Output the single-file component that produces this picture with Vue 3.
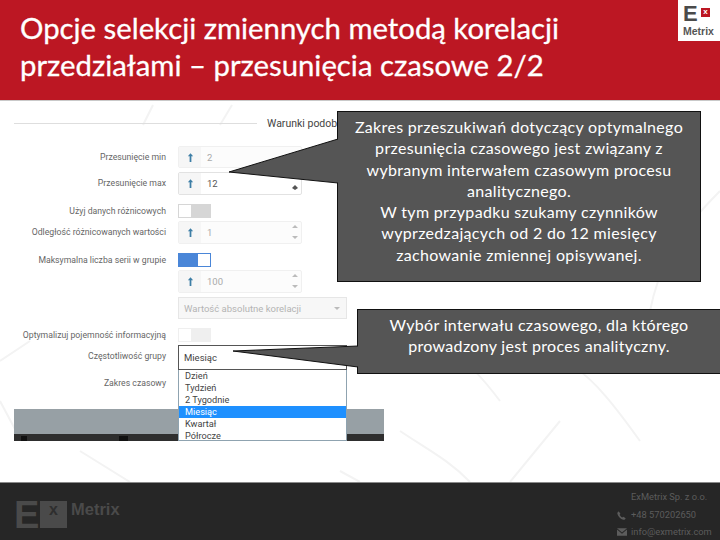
<script setup>
const options = ['Dzień', 'Tydzień', '2 Tygodnie', 'Miesiąc', 'Kwartał', 'Półrocze']
const selected = 'Miesiąc'
</script>

<template>
  <div class="slide">
    <header class="head">
      <h1>Opcje selekcji zmiennych metodą korelacji<br />przedziałami – przesunięcia czasowe 2/2</h1>
      <div class="logo">
        <div class="logo-top">
          <span class="logo-e">E</span>
          <span class="logo-x">x</span>
        </div>
        <div class="logo-name">Metrix</div>
      </div>
    </header>

    <main class="body">
      <svg class="watermark" viewBox="0 0 720 381" fill="none" stroke="#f3f3f3" stroke-width="2">
        <path d="M153 4 L143 24 M232 4 L220 24 M470 10 L420 60 M720 90 C680 130 660 160 650 210" />
        <path d="M0 300 L16 330 M0 260 L30 240 M400 250 C440 230 470 260 500 300 M520 270 C560 240 590 270 640 340" />
        <path d="M80 350 L130 381 M560 320 L510 381 M400 330 C430 350 450 360 470 381 M340 370 L360 381" />
      </svg>

      <div class="form">
        <div class="legend">
          <span class="legend-line"></span>
          <span class="legend-text">Warunki podobieństwa</span>
        </div>

        <div class="row row-input">
          <label>Przesunięcie min</label>
          <div class="field off">
            <span class="addon"><svg viewBox="0 0 8 10" width="7" height="9"><path d="M4 0 L7 3.500 H5 V10 H3 V3.500 H1 Z" fill="#3d7ea6" /></svg></span>
            <span class="val">2</span>
          </div>
        </div>
        <div class="row row-input tall">
          <label>Przesunięcie max</label>
          <div class="field">
            <span class="addon"><svg viewBox="0 0 8 10" width="7" height="9"><path d="M4 0 L7 3.500 H5 V10 H3 V3.500 H1 Z" fill="#3d7ea6" /></svg></span>
            <span class="val">12</span>
            <span class="spin">
              <svg viewBox="0 0 6 14" width="6" height="14"><path d="M3 9 L6 12 L3 14 L0 12 Z" fill="#555" /></svg>
            </span>
          </div>
        </div>
        <div class="row row-switch">
          <label>Użyj danych różnicowych</label>
          <span class="toggle"></span>
        </div>
        <div class="row row-input tall">
          <label>Odległość różnicowanych wartości</label>
          <div class="field off">
            <span class="addon"><svg viewBox="0 0 8 10" width="7" height="9"><path d="M4 0 L7 3.500 H5 V10 H3 V3.500 H1 Z" fill="#3d7ea6" /></svg></span>
            <span class="val">1</span>
            <span class="spin faint">
              <svg viewBox="0 0 6 14" width="6" height="14"><path d="M3 0 L6 3 H0 Z M3 14 L6 11 H0 Z" fill="#bbb" /></svg>
            </span>
          </div>
        </div>
        <div class="row row-switch">
          <label>Maksymalna liczba serii w grupie</label>
          <span class="toggle on"></span>
        </div>
        <div class="row row-input tall">
          <label></label>
          <div class="field off">
            <span class="addon"><svg viewBox="0 0 8 10" width="7" height="9"><path d="M4 0 L7 3.500 H5 V10 H3 V3.500 H1 Z" fill="#3d7ea6" /></svg></span>
            <span class="val">100</span>
            <span class="spin faint">
              <svg viewBox="0 0 6 14" width="6" height="14"><path d="M3 0 L6 3 H0 Z M3 14 L6 11 H0 Z" fill="#bbb" /></svg>
            </span>
          </div>
        </div>
        <div class="row row-input">
          <label></label>
          <div class="select off">
            <span>Wartość absolutne korelacji</span>
            <i class="caret"></i>
          </div>
        </div>
        <div class="row row-switch">
          <label>Optymalizuj pojemność informacyjną</label>
          <span class="toggle dim"></span>
        </div>
        <div class="row row-open">
          <label>Częstotliwość grupy</label>
          <div class="select-wrap">
            <div class="select open"><span>{{ selected }}</span></div>
            <ul class="menu">
              <li v-for="opt in options" :key="opt" :class="{ active: opt === selected }">{{ opt }}</li>
            </ul>
          </div>
        </div>
        <div class="row row-last">
          <label>Zakres czasowy</label>
        </div>

        <div class="bar">
          <div class="bar-dark">
            <span class="peg"></span>
            <span class="peg peg-2"></span>
          </div>
        </div>
      </div>

      <div class="note note-one">
        <svg class="tail tail-one" viewBox="0 0 111 46" width="111" height="46">
          <path d="M110 1 L1 34 L110 45" fill="#555" stroke="#111" stroke-width="1" />
          <path d="M109 2 H111 V44 H109 Z" fill="#555" />
        </svg>
        Zakres przeszukiwań dotyczący optymalnego<br />
        przesunięcia czasowego jest związany z<br />
        wybranym interwałem czasowym procesu<br />
        analitycznego.<br />
        W tym przypadku szukamy czynników<br />
        wyprzedzających od 2 do 12 miesięcy<br />
        zachowanie zmiennej opisywanej.
      </div>

      <div class="note note-two">
        <svg class="tail tail-two" viewBox="0 0 127 24" width="127" height="24">
          <path d="M126 1 L1 6 L126 22" fill="#555" stroke="#111" stroke-width="1" />
          <path d="M125 2 H127 V21 H125 Z" fill="#555" />
        </svg>
        Wybór interwału czasowego, dla którego<br />
        prowadzony jest proces analityczny.
      </div>
    </main>

    <footer class="foot">
      <div class="foot-logo">
        <span class="foot-e">E</span>
        <span class="foot-x">x</span>
        <span class="foot-name">Metrix</span>
      </div>
      <div class="contact">
        <div class="line">ExMetrix Sp. z o.o.</div>
        <div class="line">
          <svg class="ico" viewBox="0 0 12 12" width="9" height="9">
            <path d="M2.500 0.500 L4.500 3.500 L3.500 5 C4.300 6.700 5.300 7.700 7 8.500 L8.500 7.500 L11.500 9.500 C11 11 9.800 11.800 8.500 11.500 C4.500 10.500 1.500 7.500 0.500 3.500 C0.200 2.200 1 1 2.500 0.500 Z" fill="#5c5c5c" />
          </svg>
          +48 570202650
        </div>
        <div class="line">
          <svg class="ico" viewBox="0 0 12 9" width="10" height="8">
            <path d="M0 0 H12 L6 5 Z M0 1.500 L6 6.500 L12 1.500 V9 H0 Z" fill="#5c5c5c" />
          </svg>
          info@exmetrix.com
        </div>
      </div>
    </footer>
  </div>
</template>

<style>
html,
body {
  margin: 0;
  background: #fff;
}
</style>

<style scoped>
.slide {
  width: 720px;
  height: 540px;
  display: flex;
  flex-direction: column;
  overflow: hidden;
  font-family: 'Open Sans', 'Liberation Sans', sans-serif;
}

/* naglowek */
.head {
  height: 100px;
  flex: none;
  display: flex;
  justify-content: space-between;
  align-items: flex-start;
  background: #bc1723;
  border-bottom: 1px solid #c9c9c9;
}

.head h1 {
  margin: 9px 0 0 20px;
  font-family: Lato, 'Open Sans', sans-serif;
  font-size: 29.300px;
  line-height: 37px;
  font-weight: 400;
  color: #fff;
  -webkit-text-stroke: 0.3px #fff;
  white-space: nowrap;
}

.logo {
  width: 42px;
  height: 41px;
  background: #fff;
  box-sizing: border-box;
  padding: 5px 0 0 5px;
}

.logo-top {
  display: flex;
  align-items: flex-start;
  height: 20px;
}

.logo-e {
  font: 700 22px/18px 'Liberation Sans', sans-serif;
  color: #4a4a4a;
  width: 18px;
}

.logo-x {
  width: 9px;
  height: 9px;
  margin: 3px 0 0 0;
  background: #bc1723;
  color: #fff;
  font: 700 8px/8px 'Liberation Sans', sans-serif;
  text-align: center;
}

.logo-name {
  margin-top: 1px;
  font: 700 10.500px/11px 'Liberation Sans', sans-serif;
  color: #555;
}

/* tresc */
.body {
  flex: 1;
  position: relative;
  overflow: hidden;
  background: #fff;
}

.watermark {
  position: absolute;
  top: 0;
  left: 0;
  width: 720px;
  height: 381px;
}

.form {
  position: relative;
  width: 370px;
  margin-left: 14px;
  padding-top: 15px;
  font-family: Roboto, sans-serif;
  font-size: 8.700px;
  color: #666;
}

.legend {
  display: flex;
  align-items: center;
  gap: 10px;
  height: 14px;
  margin-bottom: 16px;
  white-space: nowrap;
}

.legend-line {
  width: 243px;
  height: 1px;
  background: #dedede;
}

.legend-text {
  color: #444;
  font-size: 10.500px;
}

.row {
  display: flex;
  align-items: flex-start;
  gap: 12px;
}

.row label {
  width: 152px;
  flex: none;
  text-align: right;
  white-space: nowrap;
  line-height: 14px;
}

.row-input {
  margin-bottom: 4px;
}

.row-input label {
  padding-top: 4px;
}

.row-switch {
  margin: 9px 0 3px;
}

.row-open {
  margin-bottom: 6px;
}

.row-open label {
  padding-top: 4px;
}

.row-last {
  height: 33px;
}

.field {
  width: 124px;
  height: 22px;
  box-sizing: border-box;
  display: flex;
  align-items: center;
  position: relative;
  border: 1px solid #e2e2e2;
  border-radius: 2px;
  background: #fff;
  color: #555;
  font-size: 9.500px;
}

.tall .field {
  height: 23px;
}

.field.off {
  border-color: #f0f0f0;
  color: #aaa;
  background: #fcfcfc;
}

.addon {
  width: 22px;
  height: 100%;
  display: flex;
  align-items: center;
  justify-content: center;
  background: #f6f6f6;
}

.val {
  margin-left: 6px;
}

.spin {
  position: absolute;
  right: 3px;
  top: 3px;
  height: 14px;
}

.select {
  width: 169px;
  height: 22px;
  box-sizing: border-box;
  display: flex;
  align-items: center;
  padding-left: 5px;
  position: relative;
  font-size: 9.500px;
}

.select.off {
  background: #f7f7f7;
  border: 1px solid #e6e6e6;
  color: #b4b4b4;
}

.caret {
  position: absolute;
  right: 6px;
  top: 9px;
  border: 3px solid transparent;
  border-top-color: #bbb;
}

.select-wrap {
  position: relative;
}

.select.open {
  height: 25px;
  background: #fff;
  border: 1px solid #555;
  color: #444;
}

.menu {
  position: absolute;
  top: 25px;
  left: 0;
  z-index: 2;
  width: 169px;
  height: 71px;
  box-sizing: border-box;
  margin: 0;
  padding: 0;
  list-style: none;
  overflow: hidden;
  background: #fff;
  border: 1px solid #8fa3b0;
  border-top: 0;
  color: #444;
  font-size: 9.200px;
}

.menu li {
  height: 12px;
  line-height: 12px;
  padding-left: 6px;
}

.menu li.active {
  background: #1e90ff;
  color: #fff;
}

.toggle {
  width: 33px;
  height: 14px;
  position: relative;
  display: block;
  background: #d6d6d6;
}

.toggle::before {
  content: '';
  position: absolute;
  left: 1px;
  top: 1px;
  width: 12px;
  height: 12px;
  background: #fff;
}

.toggle.on {
  background: #4a86d8;
}

.toggle.on::before {
  left: auto;
  right: 1px;
}

.toggle.dim {
  background: #efefef;
}

.bar {
  width: 370px;
  height: 32px;
  box-sizing: border-box;
  padding-top: 25px;
  background: #97a0a5;
}

.bar-dark {
  height: 7px;
  background: #2e2e2e;
  position: relative;
}

.peg {
  position: absolute;
  left: 7px;
  top: 2px;
  width: 6px;
  height: 5px;
  background: #111;
}

.peg-2 {
  left: 105px;
  width: 9px;
}

/* objasnienia */
.note {
  position: absolute;
  z-index: 3;
  box-sizing: border-box;
  background: #555;
  border: 1px solid #111;
  color: #fff;
  text-align: center;
  font-family: Lato, 'Open Sans', sans-serif;
  font-size: 16px;
  letter-spacing: 0.32px;
  line-height: 21.300px;
  white-space: nowrap;
}

.note-one {
  left: 337px;
  top: 10px;
  width: 364px;
  height: 171px;
  padding-top: 4px;
}

.note-two {
  left: 357px;
  top: 208px;
  width: 364px;
  height: 65px;
  padding-top: 4px;
}

.tail {
  position: absolute;
  overflow: visible;
}

.tail-one {
  left: -110px;
  top: 26px;
}

.tail-two {
  left: -126px;
  top: 35px;
}

/* stopka */
.foot {
  height: 58px;
  flex: none;
  display: flex;
  justify-content: space-between;
  background: #262626;
  border-top: 1px solid #8a8a8a;
  box-sizing: border-box;
}

.foot-logo {
  display: flex;
  align-items: flex-start;
  margin: 18px 0 0 14px;
  color: #4a4a4a;
}

.foot-e {
  width: 26px;
  font: 700 38px/29px 'Liberation Sans', sans-serif;
}

.foot-x {
  width: 27px;
  height: 27px;
  background: #4a4a4a;
  color: #2e2e2e;
  text-align: center;
  font: 700 16px/18px 'Liberation Sans', sans-serif;
}

.foot-name {
  margin-left: 4px;
  font: 700 16.500px/16px 'Liberation Sans', sans-serif;
}

.contact {
  width: 89px;
  padding-top: 5px;
  color: #5c5c5c;
  font-family: Roboto, sans-serif;
  font-size: 9.300px;
  line-height: 17.500px;
  white-space: nowrap;
}

.line {
  position: relative;
}

.ico {
  position: absolute;
  left: -14px;
  top: 5px;
}
</style>
